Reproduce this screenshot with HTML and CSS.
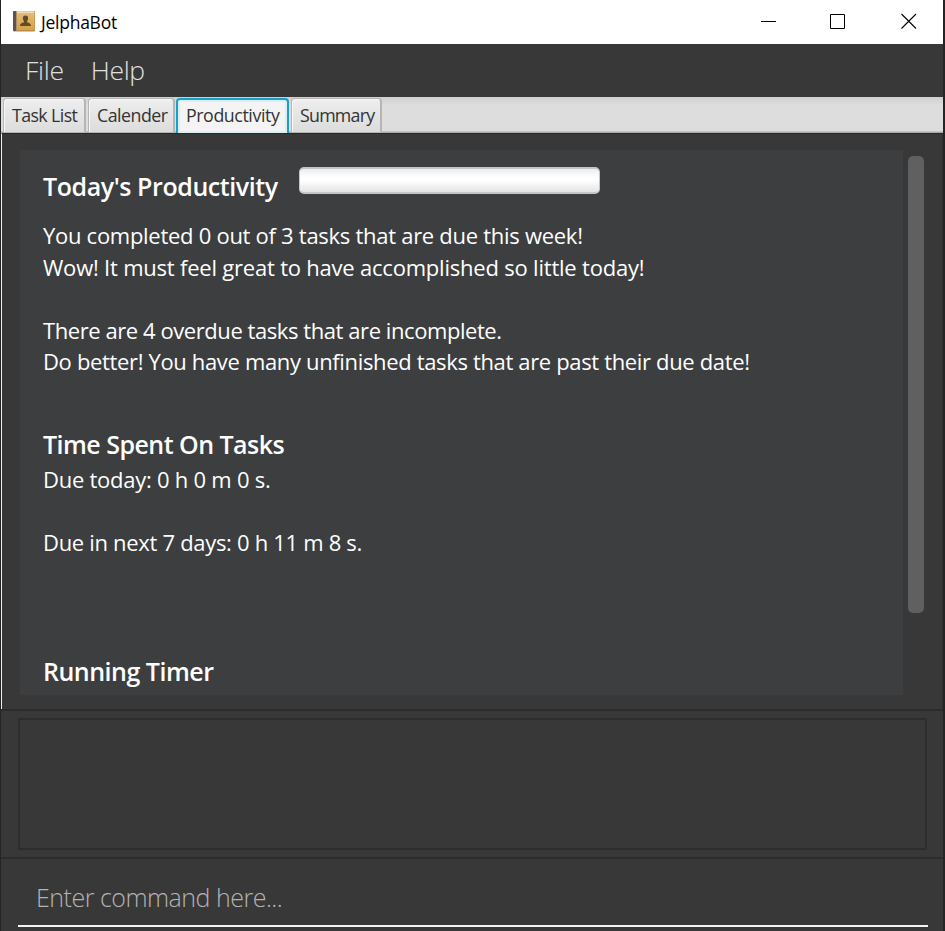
FILE: index.html
```html
<!DOCTYPE html>
<html lang="en">
<head>
<meta charset="utf-8">
<title>JelphaBot</title>
<link rel="stylesheet" href="styles.css">
</head>
<body>
<div class="window">
  <header class="titlebar">
    <svg class="app-icon" width="22" height="21" viewBox="0 0 22 21">
      <defs><linearGradient id="cover" x1="0" y1="0" x2="0" y2="1"><stop offset="0" stop-color="#e3bd78"/><stop offset="1" stop-color="#d9a047"/></linearGradient></defs>
      <rect x="0" y="0" width="22" height="20.500" rx="1" fill="#b98b48"/>
      <rect x="4" y="1" width="17.500" height="18" fill="url(#cover)"/>
      <rect x="2" y="0.300" width="19" height="1.500" fill="#f3e6cc"/>
      <rect x="0" y="0" width="3.500" height="20" rx="1" fill="#65504a"/>
      <rect x="3" y="1" width="1" height="19" fill="#a8906a"/>
      <path d="M12.500 4.500c2 0 2.700 1.300 2.600 3 0 1.300-.6 2-1.100 2.700v1c1.500.4 4 1 4 3.800H7c0-2.800 2.500-3.400 4-3.800v-1c-.6-.7-1.100-1.400-1.100-2.700-.1-1.700.6-3 2.600-3z" fill="#634b27"/>
    </svg>
    <span class="app-name">JelphaBot</span>
    <div class="controls">
      <svg width="16" height="16" viewBox="0 0 16 16"><path d="M0 8.500h15" stroke="#000"/></svg>
      <svg width="16" height="16" viewBox="0 0 16 16"><path d="M.5 1.500h14v14H.5z" fill="none" stroke="#000"/></svg>
      <svg width="16" height="16" viewBox="0 0 16 16"><path d="M.5 1l14.500 14.500M15 1L.5 15.500" stroke="#000" stroke-width="1.100"/></svg>
    </div>
  </header>
  <nav class="menubar"><span class="menu-file">File</span><span class="menu-help">Help</span></nav>
  <div class="tabs">
    <div class="tab tab-tasks"><span>Task List</span></div>
    <div class="tab tab-calendar"><span>Calender</span></div>
    <div class="tab tab-productivity selected"><span>Productivity</span></div>
    <div class="tab tab-summary"><span>Summary</span></div>
  </div>
  <main class="content">
    <section class="panel">
      <div class="head-row"><h2 class="h-today">Today's Productivity</h2><div class="progress"></div></div>
      <div class="text-block progress-text">
        <p class="l1">You completed 0 out of 3 tasks that are due this week!</p>
        <p class="l2">Wow! It must feel great to have accomplished so little today!</p>
        <p>&nbsp;</p>
        <p class="l3">There are 4 overdue tasks that are incomplete.</p>
        <p class="l4">Do better! You have many unfinished tasks that are past their due date!</p>
      </div>
      <h2 class="h-time">Time Spent On Tasks</h2>
      <div class="text-block time-text">
        <p class="l5">Due today: 0 h 0 m 0 s.</p>
        <p>&nbsp;</p>
        <p class="l6">Due in next 7 days: 0 h 11 m 8 s.</p>
      </div>
      <h2 class="h-timer">Running Timer</h2>
    </section>
    <div class="scrollbar"></div>
  </main>
  <section class="result"><div class="result-box"></div></section>
  <footer class="command"><div class="field"><span>Enter command here...</span></div></footer>
</div>
</body>
</html>
```
FILE: styles.css
```css
* { box-sizing: border-box; }
body { margin: 0; background: #242424; font-family: "Open Sans", "Noto Sans", sans-serif; overflow: hidden; }
h2, p { margin: 0; }
span, h2, p { white-space: nowrap; }
.window { width: 942px; height: 931px; margin-left: 1px; display: flex; flex-direction: column; background: #383838; }
.titlebar { height: 44px; flex: none; background: #fff; display: flex; align-items: center; padding-left: 12px; }
.app-icon { margin-top: -2px; }
.app-name { font-size: 17.5px; margin-left: 6px; letter-spacing: -0.25px; color: #000; }
.controls { margin-left: auto; display: flex; gap: 54px; padding-right: 26px; margin-top: -2px; }
.controls svg:nth-child(2) { margin-left: -1px; margin-right: 1px; }
.menubar { height: 53px; flex: none; display: flex; align-items: center; padding: 0 0 2px 24px; gap: 27px; font-size: 26.5px; font-weight: 300; letter-spacing: -0.3px; color: #e0e0e0; }
.tabs { height: 36px; flex: none; display: flex; gap: 2px; padding: 1px 0 0 2px; background: linear-gradient(#cfcfcf, #ddd 8px, #ddd 34px, #aaa 35px); }
.tab { height: 35px; border: 1px solid #b5b5b5; border-width: 1px 2px 1px 1px; border-radius: 4px 4px 0 0; background: linear-gradient(#eee, #dcdcdc); box-shadow: inset 1px 1px #f8f8f8; display: flex; align-items: center; padding: 0 0 2px 8px; font-size: 17.8px; color: #333; }
.tab-tasks { width: 83px; letter-spacing: -0.6px; }
.tab-calendar { width: 87px; letter-spacing: -0.5px; }
.tab-productivity { width: 113px; letter-spacing: -0.42px; }
.tab-summary { width: 91px; letter-spacing: -0.75px; }
.tab.selected { margin-left: -1px; border: 2px solid #18a0ca; border-bottom: 0; padding-left: 8px; padding-bottom: 3px; background: #f4f4f4; box-shadow: inset 0 0 0 2px #d9eef5; }
.content { height: 576px; flex: none; border-left: 1px solid #f0f0f0; border-top: 1px solid #282828; border-right: 1px solid #303030; display: flex; padding: 16px 0 0 18px; }
.panel { width: 883px; height: 545px; background: #3c3e3f; padding-left: 23px; overflow: hidden; color: #fff; }
.head-row { display: flex; height: 70px; padding-top: 17px; }
h2 { font-size: 25px; font-weight: 600; line-height: 36px; height: 36px; }
.h-today { width: 256px; margin-top: 1px; letter-spacing: -0.43px; }
.progress { width: 301px; height: 27px; border: 2px solid #c5c5c5; border-left-width: 1px; border-right-width: 1px; border-radius: 5px; background: linear-gradient(#ececec, #fff 35%, #fff 50%, #e4e4e4); }
.text-block { font-size: 22px; line-height: 31.5px; }
.l1 { letter-spacing: -0.28px; }
.l2 { letter-spacing: -0.21px; }
.l3 { letter-spacing: -0.43px; }
.l4 { letter-spacing: -0.345px; }
.l5 { letter-spacing: -0.25px; }
.l6 { letter-spacing: -0.31px; }
.time-text { margin-top: 2px; }
.h-time { margin-top: 48px; letter-spacing: -0.53px; }
.h-timer { margin-top: 95px; letter-spacing: -0.5px; }
.scrollbar { width: 16px; height: 457px; margin: 6px 0 0 5px; border-radius: 5px; background: #606060; }
.result { height: 150px; flex: none; border-top: 2px solid #2c2c2c; border-bottom: 2px solid #2c2c2c; padding: 7px 16px 0 17px; }
.result-box { height: 132px; border: 2px solid #2d2d2d; }
.command { flex: 1; padding: 0 15px 0 17px; }
.field { height: 68px; border-bottom: 2px solid #f2f2f2; display: flex; align-items: center; padding: 9px 0 0 18px; color: #b3b3b3; font-size: 25px; font-weight: 300; letter-spacing: -0.5px; }
```
